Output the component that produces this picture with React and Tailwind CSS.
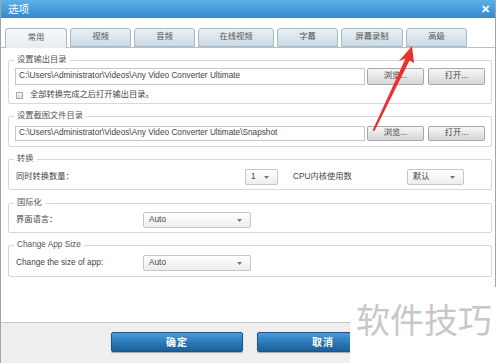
import React from 'react'

const tabs = [
  { label: '常用', w: 'w-[62px]', active: true },
  { label: '视频', w: 'w-[61px]' },
  { label: '音频', w: 'w-[61px]' },
  { label: '在线视频', w: 'w-[76px]' },
  { label: '字幕', w: 'w-[61px]' },
  { label: '屏幕录制', w: 'w-[62px]' },
  { label: '高级', w: 'w-[61px]' },
]

function Group({ title, className, children }) {
  return (
    <div className={'relative border border-[#d8d8d8] rounded-[2px] ' + className}>
      <span className="absolute left-[5px] -top-[6px] bg-white px-[3px] text-[8.25px] leading-[10px] text-[#555]">{title}</span>
      {children}
    </div>
  )
}

function Arrow() {
  return (
    <svg width="5" height="3" viewBox="0 0 5 3">
      <path d="M0 0 L5 0 L2.5 3 Z" fill="#777" />
    </svg>
  )
}

function Dropdown({ value, w }) {
  return (
    <div className={'h-[16px] flex items-center justify-between pl-[5px] pr-[8px] border border-[#c6c6c6] rounded-[2px] bg-linear-to-b from-white to-[#ededed] text-[8.25px] text-[#444] ' + w}>
      <span>{value}</span>
      <Arrow />
    </div>
  )
}

function GrayButton({ children, h }) {
  return (
    <div className={'w-[57px] flex items-center justify-center border border-[#a8a8a8] rounded-[2px] bg-linear-to-b from-[#f7f7f7] to-[#d6d6d6] text-[8.25px] text-[#444] ' + h}>
      {children}
    </div>
  )
}

function PathRow({ path, h }) {
  return (
    <div className="flex items-center pl-[6px]">
      <div className={'w-[350px] flex items-center pl-[3px] border border-[#c8c8c8] bg-white text-[8.25px] text-[#444] ' + h}>{path}</div>
      <div className="ml-[2px]"><GrayButton h={h}>浏览...</GrayButton></div>
      <div className="ml-[4px]"><GrayButton h={h}>打开...</GrayButton></div>
    </div>
  )
}

function BlueButton({ children }) {
  return (
    <div className="w-[132px] h-[20px] flex items-center justify-center border border-[#1c5482] rounded-[2px] bg-linear-to-b from-[#4b9bd5] via-[#2c7bbb] to-[#1d5f97] text-white text-[10px] font-bold tracking-[1px] shadow-[0_1px_1px_rgba(0,0,0,0.3)]">
      {children}
    </div>
  )
}

export default function App() {
  return (
    <div className="relative w-[500px] h-[363px] overflow-hidden bg-white font-['Liberation_Sans','Noto_Sans_CJK_SC',sans-serif]">
      <div className="w-[496px] h-full flex flex-col border-l border-r border-[#9ba6b0]">
        <div className="h-[18px] flex items-center justify-between pl-[7px] pr-[5px] bg-linear-to-b from-[#5db1e8] to-[#3489cc] text-white">
          <span className="text-[10.5px] leading-none">选项</span>
          <span className="text-[11px] font-bold leading-none">✕</span>
        </div>

        <div className="flex-1 flex flex-col pt-[10px]">
          <div className="h-[19px] flex items-end gap-[3px] pl-[4px]">
            {tabs.map((t, i) => (
              <div
                key={i}
                className={
                  'h-[19px] flex items-center justify-center border border-[#a7b9c7] rounded-t-[3px] text-[8.25px] text-[#555] ' +
                  t.w + ' ' +
                  (t.active
                    ? 'relative z-10 -mb-px h-[20px] border-b-0 bg-linear-to-b from-[#f6f9fb] to-[#e6edf2]'
                    : 'bg-linear-to-b from-[#e9f0f4] to-[#cbdbe5]')
                }
              >
                {t.label}
              </div>
            ))}
          </div>

          <div className="flex-1 flex flex-col border-t border-[#b3c2cd] pl-[7px] pr-[3px] pt-[12px]">
            <Group title="设置输出目录" className="h-[44px] pt-[7px]">
              <PathRow path="C:\Users\Administrator\Videos\Any Video Converter Ultimate" h="h-[17px]" />
              <div className="mt-[4px] h-[13px] flex items-center pl-[7px] gap-[7px] text-[8.25px] text-[#444]">
                <div className="w-[7px] h-[7px] border border-[#a9a9a9] bg-linear-to-b from-[#f4f4f4] to-[#dedede]" />
                <span>全部转换完成之后打开输出目录。</span>
              </div>
            </Group>

            <Group title="设置截图文件目录" className="mt-[12px] h-[31px] pt-[9px]">
              <PathRow path="C:\Users\Administrator\Videos\Any Video Converter Ultimate\Snapshot" h="h-[15px]" />
            </Group>

            <Group title="转换" className="mt-[12px] h-[31px] pt-[9px]">
              <div className="flex items-center pl-[7px] text-[8.25px] text-[#444]">
                <span className="w-[229px]">同时转换数量：</span>
                <Dropdown value="1" w="w-[33px]" />
                <span className="ml-[15px] w-[114px]">CPU内核使用数</span>
                <Dropdown value="默认" w="w-[57px]" />
              </div>
            </Group>

            <Group title="国际化" className="mt-[13px] h-[30px] pt-[8px]">
              <div className="flex items-center pl-[7px] text-[8.25px] text-[#444]">
                <span className="w-[127px]">界面语言：</span>
                <Dropdown value="Auto" w="w-[108px]" />
              </div>
            </Group>

            <Group title="Change App Size" className="mt-[12px] h-[32px] pt-[9px]">
              <div className="flex items-center pl-[7px] text-[8.25px] text-[#444]">
                <span className="w-[127px]">Change the size of app:</span>
                <Dropdown value="Auto" w="w-[108px]" />
              </div>
            </Group>
          </div>
        </div>

        <div className="h-[41px] flex items-start gap-[14px] pl-[110px] pt-[9px] border-t border-[#c6c6c6] bg-[#eeeeee]">
          <BlueButton>确定</BlueButton>
          <BlueButton>取消</BlueButton>
        </div>
      </div>

      <svg className="absolute left-0 top-0 pointer-events-none" width="500" height="363" viewBox="0 0 500 363">
        <polygon points="412,46 414,63 409.5,60.5 374.5,131 372.5,130.5 405.5,58.5 399,61" fill="#e8322c" />
      </svg>

      <div className="absolute left-[350px] top-[287px] w-[150px] h-[76px] bg-white pl-[6px] pt-[15px]">
        <span className="block text-[34px] leading-[34px] text-[#c8c8c8] font-['Noto_Sans_CJK_SC',sans-serif]">软件技巧</span>
      </div>
    </div>
  )
}
